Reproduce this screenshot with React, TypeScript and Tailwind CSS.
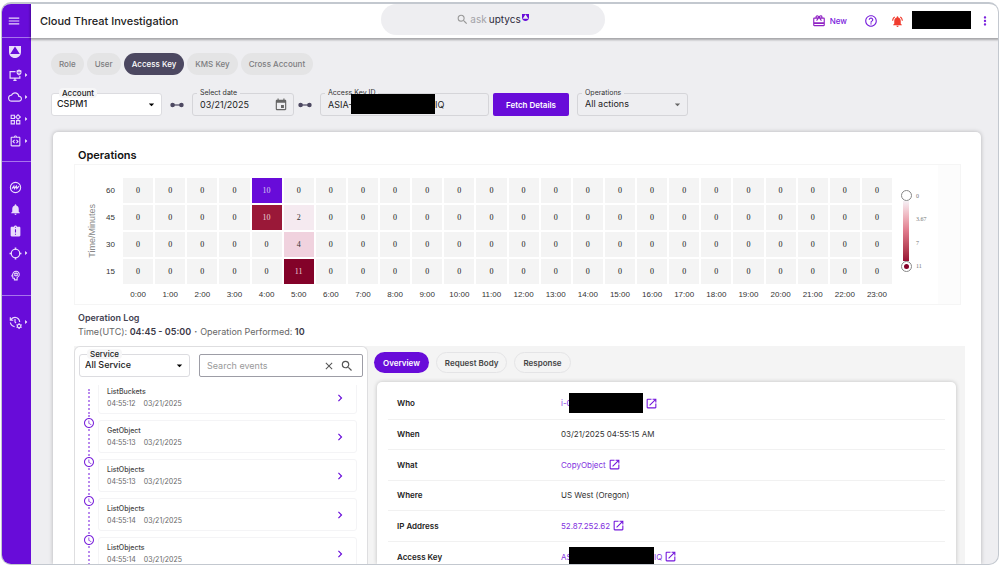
import React from "react";
import {
  MdMenu,
  MdOutlineCloud,
  MdOutlineWidgets,
  MdOutlineIntegrationInstructions,
  MdNotifications,
  MdAssignmentLate,
  MdOutlinePsychology,
  MdManageHistory,
  MdOutlineCardGiftcard,
  MdHelpOutline,
  MdNotificationsActive,
  MdMoreVert,
  MdOpenInNew,
  MdSearch,
  MdClose,
  MdChevronRight,
  MdArrowDropDown,
  MdArrowRight,
  MdInsertInvitation,
  MdAccessTime,
} from "react-icons/md";

function Shield({ className }: { className: string }) {
  return (
    <svg viewBox="0 0 12 12" className={className} fill="currentColor" aria-hidden="true">
      <path
        fillRule="evenodd"
        d="M0 0H12V6C12 9.6 9.4 12 6 12S0 9.6 0 6ZM6 0.4L1.2 8H10.8Z"
      />
    </svg>
  );
}

function Monitor() {
  return (
    <svg viewBox="0 0 24 24" className="size-[13px]" fill="none" stroke="currentColor" strokeWidth="2.2" aria-hidden="true">
      <path d="M12 5H2V17H20V13M8 21H14M11 17V21" />
      <path d="M18.5 1L23 2.6V6.5C23 9 21 11 18.5 12C16 11 14 9 14 6.5V2.6Z" fill="currentColor" stroke="none" />
      <path d="M18.5 3.5V10M15.5 6.5H21.5" stroke="#680cd9" strokeWidth="1" />
    </svg>
  );
}

function Pulse() {
  return (
    <svg viewBox="0 0 24 24" className="size-[13px]" fill="none" stroke="currentColor" strokeWidth="2" aria-hidden="true">
      <circle cx="12" cy="12" r="9.5" />
      <path d="M5.5 14L9 9.5L10 14L13.5 9.5L14.5 14L18.5 9.5" strokeWidth="2.2" />
    </svg>
  );
}

function Target() {
  return (
    <svg viewBox="0 0 24 24" className="size-[13px]" fill="none" stroke="currentColor" strokeWidth="2.2" aria-hidden="true">
      <circle cx="12" cy="12" r="7.8" />
      <path d="M12 1V5M12 19V23M1 12H5M19 12H23" strokeWidth="3" />
    </svg>
  );
}

function NavItem({ label, arrow, tall, children }: { label: string; arrow?: boolean; tall?: boolean; children: React.ReactNode }) {
  return (
    <a
      href="#"
      aria-label={label}
      className={"flex w-full items-center pl-[6px] text-[#e9dcfb] " + (tall ? "h-6" : "h-[22px]")}
    >
      <span className="flex w-[14px] justify-center">{children}</span>
      {arrow && <MdArrowRight className="-ml-px size-[10px] text-white" />}
    </a>
  );
}

function Connector() {
  return (
    <svg viewBox="0 0 14 6" className="h-[6px] w-[14px] text-[#4c4861]" fill="currentColor" aria-hidden="true">
      <circle cx="2.6" cy="3" r="2.3" />
      <circle cx="11.4" cy="3" r="2.3" />
      <rect x="3" y="2.4" width="8" height="1.2" />
    </svg>
  );
}

function Sidebar() {
  return (
    <nav aria-label="Main" className="flex w-[29px] shrink-0 flex-col bg-[#680cd9]">
      <div className="flex h-[34px] items-center border-b border-[#a874ec] pl-[5px]">
        <button aria-label="Open menu" className="text-[#e9dcfb]">
          <MdMenu className="size-[14px]" />
        </button>
      </div>
      <div className="border-b border-[#a874ec] pt-[2px] pb-[9px]">
        <NavItem label="Home" tall><Shield className="size-[12px]" /></NavItem>
        <NavItem label="Endpoints" arrow><Monitor /></NavItem>
        <NavItem label="Cloud" arrow><MdOutlineCloud className="size-[14px]" /></NavItem>
        <NavItem label="Workloads" arrow><MdOutlineWidgets className="size-[13px]" /></NavItem>
        <NavItem label="Code" arrow><MdOutlineIntegrationInstructions className="size-[13px]" /></NavItem>
      </div>
      <div className="border-b border-[#a874ec] pt-[14px] pb-[9px]">
        <NavItem label="Activity"><Pulse /></NavItem>
        <NavItem label="Alerts"><MdNotifications className="size-[13px]" /></NavItem>
        <NavItem label="Incidents"><MdAssignmentLate className="size-[13px]" /></NavItem>
        <NavItem label="Targets" arrow><Target /></NavItem>
        <NavItem label="Insights"><MdOutlinePsychology className="size-[13px]" /></NavItem>
      </div>
      <div className="pt-[15px]">
        <NavItem label="History" arrow><MdManageHistory className="size-[14px]" /></NavItem>
      </div>
    </nav>
  );
}

function Header() {
  return (
    <header className="z-10 grid h-[34px] shrink-0 grid-cols-[1fr_224px_1fr] items-center bg-white shadow-[0_1px_2px_1px_rgba(0,0,0,0.3)]">
      <h1 className="pl-[9px] text-[11px] font-medium text-[#222]">Cloud Threat Investigation</h1>
      <button className="mb-[3px] ml-[-22px] flex h-[31px] w-[224px] items-center justify-center rounded-full bg-[#eeeef1] text-[10px]">
        <MdSearch className="size-[13px] text-[#999]" />
        <span className="pl-px text-[#a3a3a8]">ask</span>
        <span className="pl-[2px] text-[#2d2a3c]">uptycs</span>
        <Shield className="mb-[5px] ml-px size-[7px] text-[#680cd9]" />
      </button>
      <div className="flex items-center justify-end pr-[6px] text-[#7a22dc]">
        <button className="flex items-center gap-[4px] text-[8px] font-medium">
          <MdOutlineCardGiftcard className="size-[14px] text-[#9023c4]" />
          New
        </button>
        <button aria-label="Help" className="ml-[17px]"><MdHelpOutline className="size-[14px]" /></button>
        <button aria-label="Notifications" className="ml-[13px]"><MdNotificationsActive className="size-[13px] text-[#f03c2e]" /></button>
        <span className="ml-2 mb-[3px] h-[18px] w-[59px] bg-black" />
        <button aria-label="More" className="ml-[7px]"><MdMoreVert className="size-[14px]" /></button>
      </div>
    </header>
  );
}

function FilterTabs() {
  const tabs = ["Role", "User", "Access Key", "KMS Key", "Cross Account"];
  return (
    <div className="flex gap-[3px] pl-5">
      {tabs.map((t) => (
        <button
          key={t}
          className={
            "h-[22px] rounded-full px-2 text-[8px] font-medium " +
            (t === "Access Key" ? "bg-[#4c4861] text-white" : "bg-[#e4e4e5] text-[#7c7c80]")
          }
        >
          {t}
        </button>
      ))}
    </div>
  );
}

function SelectField({ id, label, value, solid }: { id: string; label: string; value: string; solid?: boolean }) {
  return (
    <div className={"relative h-[23px] w-[111px] rounded-[3px] border " + (solid ? "border-[#dcdce0] bg-white" : "border-[#d5d5d9] bg-transparent")}>
      <label
        htmlFor={id}
        className={
          "absolute -top-[6px] px-[3px] leading-[10px] " +
          (solid ? "left-[7px] rounded-sm bg-[#f6f6f7] text-[8px] font-medium text-[#222]" : "left-[4px] bg-[#eeeef1] text-[7px] text-[#333]")
        }
      >
        {label}
      </label>
      <select
        id={id}
        className={"block h-[21px] w-full appearance-none bg-transparent pb-[2px] text-[9px] leading-[19px] text-[#222] outline-none " + (solid ? "pl-[5px] font-medium" : "pl-[7px]")}
      >
        <option>{value}</option>
      </select>
      <MdArrowDropDown className={"pointer-events-none absolute top-1 right-[3px] size-[13px] " + (solid ? "text-black" : "text-[#666]")} />
    </div>
  );
}

function Filters() {
  return (
    <div className="mt-[18px] flex items-center pl-5">
      <SelectField id="account" label="Account" value="CSPM1" solid />
      <span className="mx-2"><Connector /></span>
      <div className="relative flex h-[23px] w-[102px] items-center rounded-[3px] border border-[#d5d5d9] pr-[5px] pl-[7px]">
        <label htmlFor="date" className="absolute -top-[6px] left-[4px] bg-[#eeeef1] px-[3px] text-[7px] leading-[10px] text-[#333]">Select date</label>
        <input id="date" defaultValue="03/21/2025" className="w-0 flex-1 bg-transparent text-[9px] text-[#222] outline-none" />
        <MdInsertInvitation className="size-[14px] text-[#666]" />
      </div>
      <span className="mx-1"><Connector /></span>
      <div className="relative ml-1 flex h-[23px] w-[169px] items-center rounded-[3px] border border-[#d5d5d9] pl-[7px] text-[9px] text-[#222]">
        <span className="absolute -top-[6px] left-[4px] bg-[#eeeef1] px-[3px] text-[7px] leading-[10px] text-[#333]">Access Key ID</span>
        <span className="w-[23px] whitespace-nowrap">ASIA-</span>
        <span className="relative mb-[2px] h-[20px] w-[84px] bg-black" />
        <span>IQ</span>
      </div>
      <button className="ml-1 h-[23px] w-[76px] rounded-[2px] bg-[#680cd9] text-[8px] font-semibold text-white">Fetch Details</button>
      <span className="w-2" />
      <SelectField id="operations" label="Operations" value="All actions" />
    </div>
  );
}

const hours = Array.from({ length: 24 }, (_, i) => i);
const rows = [
  { label: "60", values: { 4: 10 } as Record<number, number>, selected: 4 },
  { label: "45", values: { 4: 10, 5: 2 } as Record<number, number> },
  { label: "30", values: { 5: 4 } as Record<number, number> },
  { label: "15", values: { 5: 11 } as Record<number, number> },
];

function cellColor(v: number, selected: boolean) {
  if (selected) return "bg-[#680cd9] text-[#d9c8f2]";
  if (v === 11) return "bg-[#830229] text-[#ecd0d8]";
  if (v === 10) return "bg-[#9a1838] text-[#ecd0d8]";
  if (v === 4) return "bg-[#f0d2de] text-[#333]";
  if (v === 2) return "bg-[#f5eaf0] text-[#333]";
  return "bg-[#f4f4f4] text-[#111]";
}

function Heatmap() {
  return (
    <div className="mt-px mr-5 ml-[21px] flex h-[141px] border border-[#f5f5f5] bg-[#fcfcfc] pr-[22px]">
      <div className="flex min-w-0 flex-1 bg-white pt-[11px]">
        <div className="flex h-[110px] w-[23px] shrink-0 items-center justify-end">
          <span className="rotate-180 font-['Liberation_Sans',sans-serif] text-[9px] leading-[12px] whitespace-nowrap text-[#888] [writing-mode:vertical-rl]">Time/Minutes</span>
        </div>
        <div className="min-w-0 flex-1">
          <table className="h-[124px] w-full table-fixed border-separate border-spacing-[2px] font-['Liberation_Sans',sans-serif] text-[8px] leading-[10px] text-[#333]">
            <colgroup>
              <col className="w-[21px]" />
              {hours.map((h) => <col key={h} />)}
            </colgroup>
            <tbody>
              {rows.map((r) => (
                <tr key={r.label} className="h-[25px]">
                  <th scope="row" className="p-0 pr-[6px] text-right font-normal">{r.label}</th>
                  {hours.map((h) => {
                    const v = r.values[h] ?? 0;
                    return (
                      <td key={h} className={"p-0 text-center font-['Liberation_Serif',serif] " + cellColor(v, r.selected === h)}>
                        {v}
                      </td>
                    );
                  })}
                </tr>
              ))}
              <tr>
                <td className="p-0" />
                {hours.map((h) => (
                  <th key={h} scope="col" className="p-0 pt-1 text-center font-normal">{h}:00</th>
                ))}
              </tr>
            </tbody>
          </table>
        </div>
        <div className="flex h-[96px] w-[44px] shrink-0 gap-[5px] pt-[14px] pl-[7px]">
          <div className="flex w-[10px] shrink-0 flex-col items-center">
            <span className="size-[11px] shrink-0 rounded-full border border-[#888] bg-white" />
            <span className="w-[6px] flex-1 bg-linear-to-b from-[#f5f0f5] via-[#e07a8c] to-[#9a1035]" />
            <span className="flex size-[11px] shrink-0 items-center justify-center rounded-full border border-[#888] bg-white">
              <span className="size-[5px] rounded-full bg-[#830229]" />
            </span>
          </div>
          <div className="flex flex-col justify-between py-[2px] font-['Liberation_Serif',serif] text-[6px] leading-[8px] text-[#777]">
            <span>0</span>
            <span>3.67</span>
            <span>7</span>
            <span>11</span>
          </div>
        </div>
      </div>
    </div>
  );
}

const events = [
  { name: "ListBuckets", time: "04:55:12" },
  { name: "GetObject", time: "04:55:13" },
  { name: "ListObjects", time: "04:55:13" },
  { name: "ListObjects", time: "04:55:14" },
  { name: "ListObjects", time: "04:55:14" },
];

function EventList() {
  return (
    <section aria-label="Events" className="flex w-[294px] shrink-0 flex-col rounded-t-md border border-b-0 border-[#dedee0] bg-white">
      <div className="flex gap-[9px] pt-[7px] pr-1 pl-1">
        <SelectField id="service" label="Service" value="All Service" solid />
        <div className="flex h-[23px] flex-1 items-center gap-[5px] rounded-[2px] border border-[#9d9da6] pr-2 pl-[7px] text-[#555]">
          <input aria-label="Search events" placeholder="Search events" className="w-0 flex-1 bg-transparent text-[9px] outline-none placeholder:text-[#999]" />
          <button aria-label="Clear"><MdClose className="size-[12px]" /></button>
          <button aria-label="Search"><MdSearch className="size-[14px]" /></button>
        </div>
      </div>
      <div className="mt-2 min-h-0 flex-1 overflow-hidden">
        <ol className="-mt-1">
          {events.map((e, i) => (
            <li key={i} className="flex h-[39px]">
              <div className="flex w-[23px] flex-col items-center pl-[5px]">
                {i > 0 && <MdAccessTime className="-mt-[3px] size-[12px] shrink-0 text-[#7a22dc]" />}
                <span className={"mb-[3px] flex-1 border-l-2 border-dotted border-[#b98aee] " + (i === 0 ? "mt-2" : "")} />
              </div>
              <button className="flex h-[33px] w-[259px] items-center justify-between rounded-[3px] border border-[#f4f4f6] pr-[9px] pl-2 text-left">
                <span className="text-[7px] leading-[12px] text-[#666]">
                  <span className="block font-medium text-[#444]">{e.name}</span>
                  <span className="mr-[8px]">{e.time}</span>
                  <span>03/21/2025</span>
                </span>
                <MdChevronRight className="size-[14px] text-[#680cd9]" />
              </button>
            </li>
          ))}
        </ol>
      </div>
    </section>
  );
}

function Redacted({ start, end, wide }: { start: string; end?: string; wide?: boolean }) {
  return (
    <>
      <span className="w-2 whitespace-nowrap">{start}</span>
      <span className={"relative -my-1 h-[20px] bg-black " + (wide ? "w-[85px]" : "w-[74px]")} />
      {end}
    </>
  );
}

const details: { label: string; value: React.ReactNode; link?: boolean }[] = [
  { label: "Who", value: <Redacted start="i-0" />, link: true },
  { label: "When", value: "03/21/2025 04:55:15 AM" },
  { label: "What", value: "CopyObject", link: true },
  { label: "Where", value: "US West (Oregon)" },
  { label: "IP Address", value: "52.87.252.62", link: true },
  { label: "Access Key", value: <Redacted start="AS" end="IQ" wide />, link: true },
];

function Details() {
  return (
    <section aria-label="Event details" className="flex min-w-0 flex-1 flex-col bg-[#f4f4f4] pt-[6px] pr-[9px] pl-[6px]">
      <div className="flex gap-[7px] text-[8px] font-semibold">
        <button className="h-[21px] rounded-full bg-[#680cd9] px-[9px] text-white">Overview</button>
        <button className="h-[21px] rounded-full border border-[#e4e4e6] px-2 text-[#444]">Request Body</button>
        <button className="h-[21px] rounded-full border border-[#e4e4e6] px-2 text-[#444]">Response</button>
      </div>
      <div className="mt-[9px] ml-[3px] min-h-0 flex-1 overflow-hidden rounded-t-[5px] bg-white px-[11px] pt-[6px] shadow-[0_0_4px_rgba(0,0,0,0.22)]">
        <table className="w-full border-collapse text-[8px] leading-[12px]">
          <tbody>
            {details.map((d) => (
              <tr key={d.label} className={"border-b border-[#f1f1f1] " + (d.link ? "h-[31px]" : "h-[30px]")}>
                <th scope="row" className="w-[173px] p-0 pl-[9px] text-left font-semibold text-[#222]">{d.label}</th>
                <td className="p-0 text-[#333]">
                  {d.link ? (
                    <a href="#" className="flex items-center text-[#8232e0]">
                      {d.value}
                      <MdOpenInNew className="ml-[2px] size-[13px] text-[#7416dc]" />
                    </a>
                  ) : (
                    d.value
                  )}
                </td>
              </tr>
            ))}
          </tbody>
        </table>
      </div>
    </section>
  );
}

export default function App() {
  return (
    <div className="h-screen bg-white pt-[2px] pr-px pl-px font-['Inter','Liberation_Sans',sans-serif]">
      <div className="flex h-full max-h-[calc(100vh-2px)] overflow-hidden rounded-[10px] border border-t-2 border-[#c3c8cf] bg-[#eeeef1]">
        <Sidebar />
        <div className="flex min-w-0 flex-1 flex-col">
          <Header />
          <main className="flex min-h-0 flex-1 flex-col pt-[15px]">
            <FilterTabs />
            <Filters />
            <div className="mt-4 mr-[17px] ml-[22px] flex min-h-0 flex-1 flex-col rounded-t-[5px] bg-white pt-4 shadow-[0_0_4px_rgba(0,0,0,0.25)]">
              <h2 className="pl-[25px] text-[11px] leading-[15px] font-semibold text-[#111]">Operations</h2>
              <Heatmap />
              <div className="mt-[6px] pl-[25px] text-[9px] leading-[14px] text-[#666]">
                <h3 className="font-semibold text-[#444252]">Operation Log</h3>
                <p>
                  Time(UTC): <b className="font-semibold text-[#3b3947]">04:45 - 05:00</b>
                  <span className="px-[3px] font-bold">·</span>
                  Operation Performed: <b className="font-semibold text-[#3b3947]">10</b>
                </p>
              </div>
              <div className="mt-[7px] mr-4 ml-[21px] flex min-h-0 flex-1 bg-[#f4f4f4]">
                <EventList />
                <Details />
              </div>
            </div>
          </main>
        </div>
      </div>
    </div>
  );
}
